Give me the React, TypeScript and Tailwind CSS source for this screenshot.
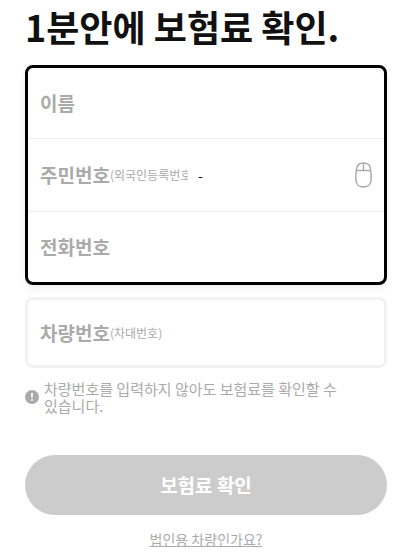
import { useState } from "react";
import type { FormEvent, ReactNode } from "react";
import clsx from "clsx";

interface FieldProps {
  id: string;
  label: string;
  note?: string;
  inputMode?: "text" | "numeric" | "tel";
  className?: string;
  clipped?: boolean;
  children?: ReactNode;
}

function Field({ id, label, note, inputMode = "text", className, clipped, children }: FieldProps) {
  const [value, setValue] = useState("");

  return (
    <div className={clsx("flex items-center px-3", className)}>
      <div className={clsx("grid h-full items-center", clipped ? "w-[148px]" : "flex-1")}>
        <label
          htmlFor={id}
          className={clsx(
            "col-start-1 row-start-1 flex items-center overflow-hidden whitespace-nowrap text-[19px] font-bold leading-7 text-[#aaa]",
            value && "invisible"
          )}
        >
          {label}
          {note && <span className="text-xs font-normal">{note}</span>}
        </label>
        <input
          id={id}
          type="text"
          inputMode={inputMode}
          value={value}
          onChange={(e) => setValue(e.target.value)}
          className="col-start-1 row-start-1 h-full w-full min-w-0 bg-transparent text-[19px] font-bold text-[#111] outline-none"
        />
      </div>
      {children}
    </div>
  );
}

function MouseIcon() {
  return (
    <svg width="17" height="26" viewBox="0 0 17 26" fill="none" stroke="#aaa" strokeWidth="1.5" aria-hidden="true">
      <path d="M8.500 1C4.200 1 2 2.800 1.600 6.500L.9 13v4.500C.9 22 4 25 8.500 25s7.600-3 7.600-7.500V13l-.7-6.500C15 2.800 12.800 1 8.500 1Z" />
      <path d="M1.500 8.500h14M8.500 1v7.500" />
    </svg>
  );
}

function NoticeIcon() {
  return (
    <svg width="14" height="14" viewBox="0 0 14 14" className="shrink-0" aria-hidden="true">
      <circle cx="7" cy="7" r="7" fill="#aaa" />
      <path d="M6 3h2l-.4 5H6.400Z" fill="#fff" />
      <circle cx="7" cy="10" r="1" fill="#fff" />
    </svg>
  );
}

export default function App() {
  const handleSubmit = (e: FormEvent) => e.preventDefault();

  return (
    <main className="bg-white pb-2 pl-[25px] pr-5 pt-1 font-['Noto_Sans_CJK_KR','Noto_Sans_KR',sans-serif]">
      <h1 className="text-4xl font-bold leading-[44px] text-[#111]">1분안에 보험료 확인.</h1>

      <form onSubmit={handleSubmit} className="mt-[17px]">
        {/* Personal info */}
        <div className="rounded-lg border-3 border-black shadow-[0_4px_8px_rgba(0,0,0,0.06)]">
          <Field id="name" label="이름" className="h-[71px] border-b border-[#eee]" />
          <Field
            id="resident-front"
            label="주민번호"
            note="(외국인등록번호)"
            inputMode="numeric"
            clipped
            className="h-[73px] border-b border-[#eee]"
          >
            <span className="ml-2.5 text-sm text-[#111]">-</span>
            <input
              type="password"
              inputMode="numeric"
              aria-label="주민번호 뒷자리"
              className="ml-2.5 h-full min-w-0 flex-1 bg-transparent text-[19px] outline-none"
            />
            <button type="button" aria-label="마우스 입력기">
              <MouseIcon />
            </button>
          </Field>
          <Field id="phone" label="전화번호" inputMode="tel" className="h-[70px]" />
        </div>

        {/* Car number */}
        <div className="mt-3 rounded-lg border-3 border-[#f2f2f2]">
          <Field id="car" label="차량번호" note="(차대번호)" className="h-[65px]" />
        </div>
        <div className="mt-3 flex items-center gap-[5px]">
          <NoticeIcon />
          <p className="max-w-[300px] break-keep text-[15px] leading-[17px] text-[#aaa]">
            차량번호를 입력하지 않아도 보험료를 확인할 수 있습니다.
          </p>
        </div>

        <button
          type="submit"
          className="mt-[41px] h-[60px] w-full rounded-full bg-[#ccc] text-[19px] font-bold text-white"
        >
          보험료 확인
        </button>
      </form>

      <div className="mt-3.5 text-center text-sm leading-5 text-[#aaa]">
        <a href="#corporate" className="underline">
          법인용 차량인가요?
        </a>
      </div>
    </main>
  );
}
